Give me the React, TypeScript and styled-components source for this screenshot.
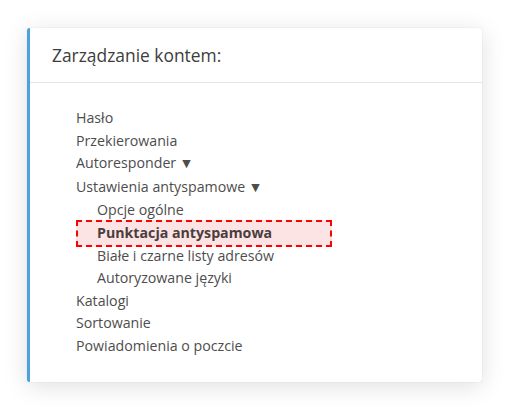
import styled, { createGlobalStyle } from "styled-components";

const GlobalStyle = createGlobalStyle`
   html, body {
      margin: 0;
      padding: 0;
      background: #ffffff;
   }
   body {
      font-family: "Open Sans", "Noto Sans", sans-serif;
      color: #4d4d4d;
   }
`;

type Item = {
   label: string;
   caret?: boolean;
   active?: boolean;
   children?: Item[];
};

const ITEMS: Item[] = [
   { label: "Hasło" },
   { label: "Przekierowania" },
   { label: "Autoresponder", caret: true },
   {
      label: "Ustawienia antyspamowe",
      caret: true,
      children: [
         { label: "Opcje ogólne" },
         { label: "Punktacja antyspamowa", active: true },
         { label: "Białe i czarne listy adresów" },
         { label: "Autoryzowane języki" },
      ],
   },
   { label: "Katalogi" },
   { label: "Sortowanie" },
   { label: "Powiadomienia o poczcie" },
];

export default function App() {
   return (
      <>
         <GlobalStyle />
         <Page>
            <Card>
               <CardHeader>
                  <Title>Zarządzanie kontem:</Title>
               </CardHeader>
               <CardBody>
                  <Menu>
                     {ITEMS.map((item) => (
                        <li key={item.label}>
                           <MenuLink>
                              {item.label}
                              {item.caret && <Caret>▼</Caret>}
                           </MenuLink>
                           {item.children && (
                              <SubMenu>
                                 {item.children.map((sub) => (
                                    <SubItem key={sub.label} $active={sub.active}>
                                       <MenuLink $active={sub.active}>{sub.label}</MenuLink>
                                    </SubItem>
                                 ))}
                              </SubMenu>
                           )}
                        </li>
                     ))}
                  </Menu>
               </CardBody>
            </Card>
         </Page>
      </>
   );
}

const Page = styled.div`
   padding: 28px 28px 28px 27px;
`;

const Card = styled.div`
   width: 455px;
   box-sizing: border-box;
   background: #fff;
   border-left: 3px solid #4aa3df;
   border-radius: 3px;
   box-shadow: 0 4px 24px rgba(0, 0, 0, 0.13), 0 0 1px rgba(0, 0, 0, 0.2);
`;

const CardHeader = styled.div`
   height: 55px;
   box-sizing: border-box;
   padding: 0 22px;
   display: flex;
   align-items: center;
   border-bottom: 1px solid #e2e4e8;
`;

const Title = styled.h2`
   margin: 0;
   font-size: 17.4px;
   font-weight: 500;
   color: #3d3d3d;
`;

const CardBody = styled.div`
   padding: 24px 46px 24px 46px;
`;

const Menu = styled.ul`
   list-style: none;
   margin: 0;
   padding: 0;
   font-size: 14.2px;
   line-height: 22.6px;
`;

const SubMenu = styled.ul`
   list-style: none;
   margin: 0;
   padding: 0;
`;

const SubItem = styled.li<{ $active?: boolean }>`
   width: 256px;
   box-sizing: border-box;
   padding-left: 21px;
   ${(p) =>
      p.$active &&
      `
      position: relative;
      background: #fde4e4;
      border: 2px dashed #ff0000;
      padding-left: 19px;
      margin: -2px 0;
   `}
`;

const MenuLink = styled.span<{ $active?: boolean }>`
   color: ${(p) => (p.$active ? "#4a3e3e" : "#4d4d4d")};
   font-weight: ${(p) => (p.$active ? 700 : 400)};
   cursor: pointer;
   white-space: nowrap;
`;

const Caret = styled.span`
   font-family: "DejaVu Sans", sans-serif;
   font-size: 11px;
   margin-left: 6px;
   vertical-align: 1px;
`;
